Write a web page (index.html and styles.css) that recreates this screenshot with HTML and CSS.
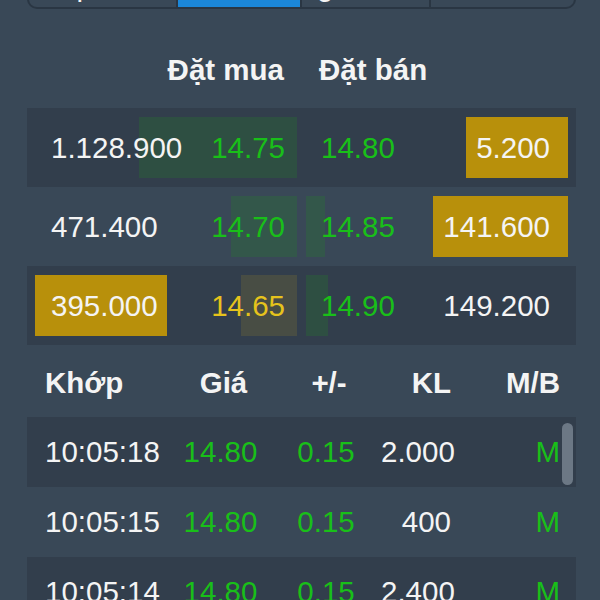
FILE: index.html
```html
<!DOCTYPE html>
<html lang="vi">
<head>
    <meta charset="UTF-8">
    <title>Sổ lệnh</title>
    <link rel="stylesheet" href="styles.css">
</head>
<body>
    <div class="panel">
        <nav class="tabs">
            <div class="tab tab-1">Tập</div>
            <div class="tab tab-2 active">Độ sâu</div>
            <div class="tab tab-3">giá</div>
            <div class="tab tab-4">Tin</div>
        </nav>

        <div class="book-head">
            <div class="half buy">Đặt mua</div>
            <div class="half sell">Đặt bán</div>
        </div>

        <div class="book">
            <div class="book-row dark">
                <div class="half buy">
                    <span class="bar" style="width: 158px"></span>
                    <span class="vol">1.128.900</span>
                    <span class="price up">14.75</span>
                </div>
                <div class="half sell">
                    <span class="bar" style="width: 0px"></span>
                    <span class="price up">14.80</span>
                    <span class="vol hl">5.200</span>
                </div>
            </div>
            <div class="book-row">
                <div class="half buy">
                    <span class="bar" style="width: 66px"></span>
                    <span class="vol">471.400</span>
                    <span class="price up">14.70</span>
                </div>
                <div class="half sell">
                    <span class="bar" style="width: 19px"></span>
                    <span class="price up">14.85</span>
                    <span class="vol hl">141.600</span>
                </div>
            </div>
            <div class="book-row dark">
                <div class="half buy">
                    <span class="bar ref" style="width: 56px"></span>
                    <span class="vol hl">395.000</span>
                    <span class="price ref">14.65</span>
                </div>
                <div class="half sell">
                    <span class="bar" style="width: 22px"></span>
                    <span class="price up">14.90</span>
                    <span class="vol">149.200</span>
                </div>
            </div>
        </div>

        <div class="trade-head">
            <span class="c-time">Khớp</span>
            <span class="c-price">Giá</span>
            <span class="c-chg">+/-</span>
            <span class="c-vol">KL</span>
            <span class="c-side">M/B</span>
        </div>

        <div class="trades">
            <div class="scroll-thumb"></div>
            <div class="trade-row dark">
                <span class="c-time">10:05:18</span>
                <span class="c-price up">14.80</span>
                <span class="c-chg up">0.15</span>
                <span class="c-vol">2.000</span>
                <span class="c-side up">M</span>
            </div>
            <div class="trade-row">
                <span class="c-time">10:05:15</span>
                <span class="c-price up">14.80</span>
                <span class="c-chg up">0.15</span>
                <span class="c-vol">400</span>
                <span class="c-side up">M</span>
            </div>
            <div class="trade-row dark">
                <span class="c-time">10:05:14</span>
                <span class="c-price up">14.80</span>
                <span class="c-chg up">0.15</span>
                <span class="c-vol">2.400</span>
                <span class="c-side up">M</span>
            </div>
        </div>
    </div>
</body>
</html>
```

FILE: styles.css
```css
body {
    margin: 0;
    background-color: #394857;
    color: #f4f4f4;
    font-family: "Liberation Sans", Arial, sans-serif;
    font-size: 29.5px;
    overflow: hidden;
}
.panel {
    width: 549px;
    margin-left: 27px;
}

/* tabs, mostly scrolled out of view */
.tabs {
    display: flex;
    height: 50px;
    margin-top: -41px;
    border: 2px solid #2a3643;
    border-top: none;
    border-radius: 0 0 10px 10px;
    overflow: hidden;
    box-sizing: border-box;
}
.tab {
    display: flex;
    align-items: flex-end;
    line-height: 1;
    padding-bottom: 7px;
    box-sizing: border-box;
    border-right: 2px solid #2a3643;
    white-space: nowrap;
    overflow: hidden;
}
.tab-1 { width: 149px; padding-left: 13px; }
.tab-2 { width: 124px; padding-left: 1px; }
.tab-3 { width: 129px; padding-left: 15px; }
.tab-4 { flex: 1; border-right: none; padding-left: 40px; }
.tab.active {
    background-color: #1b87d9;
}

/* order book */
.book-head {
    display: grid;
    grid-template-columns: 1fr 1fr;
    column-gap: 9px;
    height: 99px;
    align-items: center;
    font-weight: bold;
    padding-top: 22px;
    box-sizing: border-box;
}
.book-head .buy {
    text-align: right;
    padding-right: 13px;
}
.book-head .sell {
    padding-left: 13px;
}
.book-row {
    display: grid;
    grid-template-columns: 1fr 1fr;
    column-gap: 9px;
    height: 79px;
}
.dark {
    background-color: #323e4c;
}
.half {
    position: relative;
}
.book-row .half {
    display: flex;
    align-items: center;
    justify-content: space-between;
    padding: 9px 0;
    box-sizing: border-box;
}
.bar {
    position: absolute;
    top: 9px;
    bottom: 9px;
    background-color: rgba(34, 139, 34, 0.22);
}
.bar.ref {
    background-color: rgba(200, 170, 30, 0.15);
}
.buy .bar { right: 0; }
.sell .bar { left: 0; }
.vol, .price {
    position: relative;
    height: 100%;
    display: flex;
    align-items: center;
    box-sizing: border-box;
    white-space: nowrap;
}
.buy .vol {
    margin-left: 8px;
    padding: 0 9px 0 16px;
}
.sell .vol {
    margin-right: 8px;
    padding: 0 18px 0 10px;
}
.buy .price { padding-right: 12px; }
.sell .price { padding-left: 15px; }
.vol.hl {
    background-color: #b8900b;
}
.up {
    color: #19bf19;
}
.price.ref {
    color: #e6c31c;
}

/* matched trades */
.trade-head, .trade-row {
    display: grid;
    grid-template-columns: 125px 101px 110px 70px 1fr;
    padding: 0 16px 0 18px;
    align-items: center;
}
.trade-head {
    height: 72px;
    font-weight: bold;
    padding-top: 4px;
    box-sizing: border-box;
}
.trade-row {
    height: 70px;
}
.trades {
    position: relative;
}
.c-price, .c-chg { text-align: center; }
.c-vol, .c-side { text-align: right; }
.trade-head .c-price { padding-left: 6px; }
.trade-head .c-chg { padding-left: 6px; }
.scroll-thumb {
    position: absolute;
    top: 6px;
    right: 3px;
    width: 11px;
    height: 62px;
    border-radius: 6px;
    background-color: #6c7885;
}
```
